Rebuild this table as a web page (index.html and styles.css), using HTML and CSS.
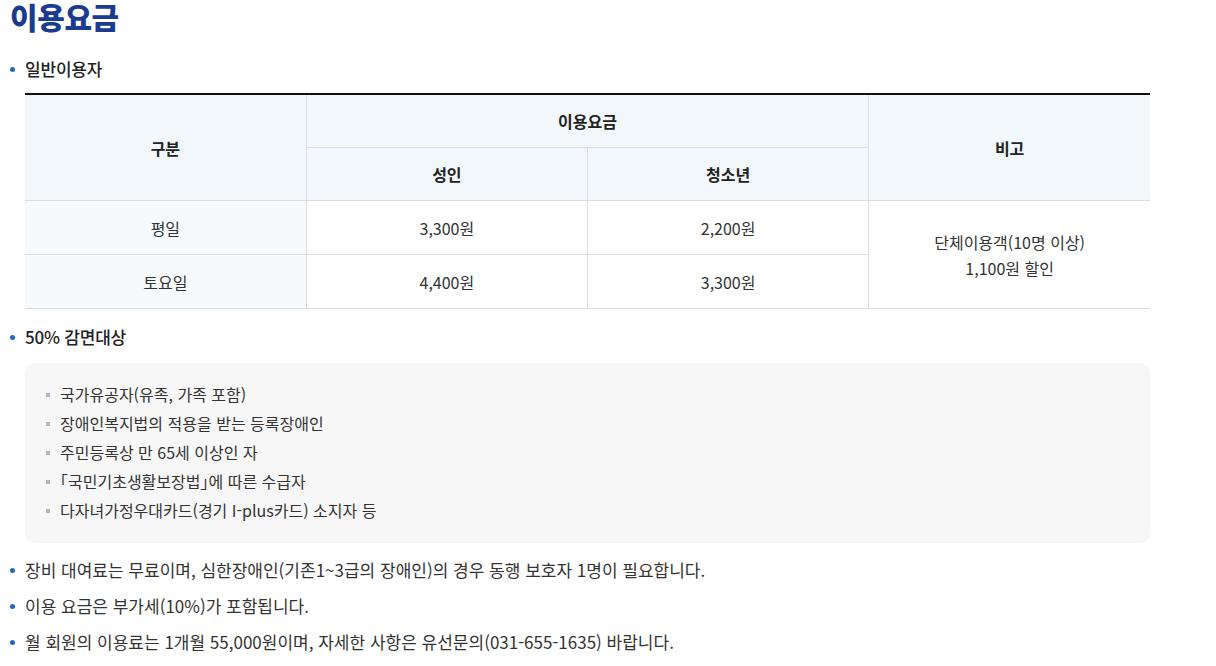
FILE: index.html
```html
<!DOCTYPE html>
<html lang="ko">
<head>
<meta charset="utf-8">
<link rel="stylesheet" href="styles.css">
</head>
<body>
<div class="page">
  <h2 class="title">이용요금</h2>
  <ul class="bullets">
    <li class="sec">
      <span class="sec-label">일반이용자</span>
      <table class="fee">
        <colgroup><col><col><col><col></colgroup>
        <thead>
          <tr><th rowspan="2">구분</th><th colspan="2">이용요금</th><th rowspan="2">비고</th></tr>
          <tr><th>성인</th><th>청소년</th></tr>
        </thead>
        <tbody>
          <tr><th class="rowh">평일</th><td>3,300원</td><td>2,200원</td><td rowspan="2">단체이용객(10명 이상)<br>1,100원 할인</td></tr>
          <tr><th class="rowh">토요일</th><td>4,400원</td><td>3,300원</td></tr>
        </tbody>
      </table>
    </li>
    <li class="sec">
      <span class="sec-label">50% 감면대상</span>
      <div class="box">
        <ul class="squares">
          <li>국가유공자(유족, 가족 포함)</li>
          <li>장애인복지법의 적용을 받는 등록장애인</li>
          <li>주민등록상 만 65세 이상인 자</li>
          <li>｢국민기초생활보장법｣에 따른 수급자</li>
          <li>다자녀가정우대카드(경기 I-plus카드) 소지자 등</li>
        </ul>
      </div>
    </li>
    <li class="note">장비 대여료는 무료이며, 심한장애인(기존1~3급의 장애인)의 경우 동행 보호자 1명이 필요합니다.</li>
    <li class="note">이용 요금은 부가세(10%)가 포함됩니다.</li>
    <li class="note">월 회원의 이용료는 1개월 55,000원이며, 자세한 사항은 유선문의(031-655-1635) 바랍니다.</li>
  </ul>
</div>
</body>
</html>
```
FILE: styles.css
```css
html, body {
  margin: 0;
  padding: 0;
  background: #fff;
}
body {
  font-family: "Noto Sans CJK KR", "Noto Sans", sans-serif;
  color: #333;
  font-size: 16px;
}
.page {
  padding: 0 66px 0 10px;
  width: 1140px;
}
.title {
  margin: 0;
  font-size: 30px;
  line-height: 33px;
  font-weight: 900;
  color: #1b3b8e;
  letter-spacing: -0.4px;
}
.bullets {
  list-style: none;
  margin: 24px 0 0 0;
  padding: 0;
}
.bullets > li {
  position: relative;
  padding-left: 15px;
  line-height: 24px;
  font-size: 17px;
}
.bullets > li::before {
  content: "";
  position: absolute;
  left: 0;
  top: 10px;
  width: 5px;
  height: 5px;
  border-radius: 50%;
  background: #1c6bbf;
}
.sec-label {
  display: block;
  font-weight: 500;
  color: #222;
  letter-spacing: -0.2px;
}
.sec + .sec {
  margin-top: 16px;
}
.fee {
  margin-top: 12px;
  width: 100%;
  border-collapse: collapse;
  table-layout: fixed;
  border-top: 2px solid #111;
  text-align: center;
}
.fee th, .fee td {
  border: 1px solid #dcdde0;
  padding: 0;
  font-size: 16px;
}
.fee tr > :first-child { border-left: none; }
.fee tr > :last-child { border-right: none; }
.fee tbody tr > td[rowspan] { border-right: none; }
.fee thead th {
  background: #f2f7fb;
  font-weight: 700;
  color: #222;
  height: 52px;
}
.fee tbody td, .fee tbody th {
  height: 53px;
  color: #333;
}
.fee tbody th.rowh {
  background: #f7fafd;
  font-weight: 400;
}
.fee tbody td[rowspan] {
  line-height: 26px;
}
.box {
  margin-top: 14px;
  background: #f7f7f7;
  border-radius: 10px;
  padding: 17px 20px 18px 20px;
}
.squares {
  list-style: none;
  margin: 0;
  padding: 0;
}
.squares li {
  position: relative;
  padding-left: 15px;
  line-height: 29px;
  font-size: 16px;
  color: #333;
}
.squares li::before {
  content: "";
  position: absolute;
  left: 1px;
  top: 13px;
  width: 4px;
  height: 4px;
  background: #b5b5b5;
}
.note {
  color: #333;
}
.sec + .note {
  margin-top: 15px;
}
.note + .note {
  margin-top: 12px;
}
```
